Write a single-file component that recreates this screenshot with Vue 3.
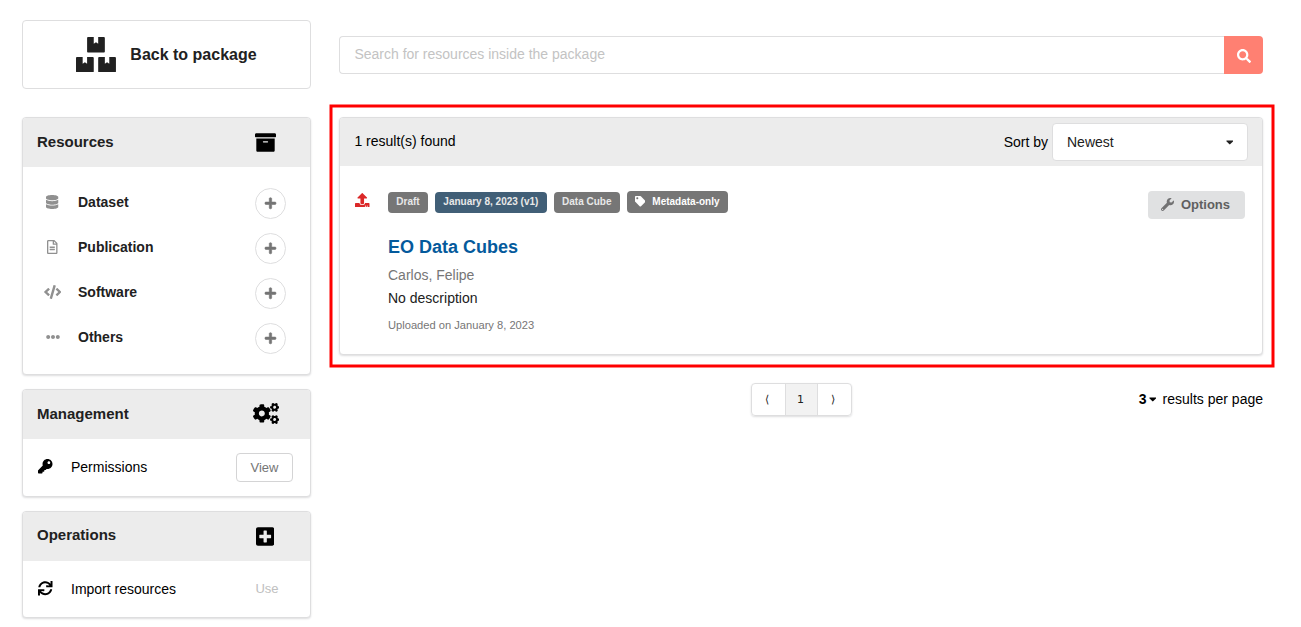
<script setup>
import { h } from 'vue'

const icons = {
  boxes: [576, 'M560 288h-80v96l-32-21.3-32 21.3v-96h-80c-8.8 0-16 7.2-16 16v192c0 8.8 7.2 16 16 16h224c8.8 0 16-7.2 16-16V304c0-8.8-7.2-16-16-16zm-384-64h224c8.8 0 16-7.2 16-16V16c0-8.8-7.2-16-16-16h-80v96l-32-21.3L256 96V0h-80c-8.8 0-16 7.2-16 16v192c0 8.8 7.2 16 16 16zm64 64h-80v96l-32-21.3L96 384v-96H16c-8.8 0-16 7.2-16 16v192c0 8.8 7.2 16 16 16h224c8.8 0 16-7.2 16-16V304c0-8.8-7.2-16-16-16z'],
  archive: [512, 'M32 448c0 17.7 14.3 32 32 32h384c17.7 0 32-14.3 32-32V160H32v288zm160-212c0-6.6 5.4-12 12-12h104c6.6 0 12 5.4 12 12v8c0 6.6-5.4 12-12 12H204c-6.6 0-12-5.4-12-12v-8zM480 32H32C14.3 32 0 46.3 0 64v48c0 8.8 7.2 16 16 16h480c8.8 0 16-7.2 16-16V64c0-17.7-14.3-32-32-32z'],
  database: [448, 'M448 73.143v45.714C448 159.143 347.667 192 224 192S0 159.143 0 118.857V73.143C0 32.857 100.333 0 224 0s224 32.857 224 73.143zM448 176v102.857C448 319.143 347.667 352 224 352S0 319.143 0 278.857V176c48.125 33.143 136.208 48.572 224 48.572S399.874 209.143 448 176zm0 160v102.857C448 479.143 347.667 512 224 512S0 479.143 0 438.857V336c48.125 33.143 136.208 48.572 224 48.572S399.874 369.143 448 336z'],
  file: [384, 'M288 248v28c0 6.6-5.4 12-12 12H108c-6.6 0-12-5.4-12-12v-28c0-6.6 5.4-12 12-12h168c6.6 0 12 5.4 12 12zm-12 72H108c-6.6 0-12 5.4-12 12v28c0 6.6 5.4 12 12 12h168c6.6 0 12-5.4 12-12v-28c0-6.6-5.4-12-12-12zm108-188.1V464c0 26.5-21.5 48-48 48H48c-26.5 0-48-21.5-48-48V48C0 21.5 21.5 0 48 0h204.1C264.8 0 277 5.1 286 14.1L369.9 98c9 8.9 14.1 21.2 14.1 33.9zm-128-80V128h76.1L256 51.9zM336 464V176H232c-13.3 0-24-10.7-24-24V48H48v416h288z'],
  code: [640, 'M278.9 511.5l-61-17.7c-6.4-1.8-10-8.5-8.2-14.9L346.2 8.7c1.8-6.4 8.5-10 14.9-8.2l61 17.7c6.4 1.8 10 8.5 8.2 14.9L293.8 503.3c-1.9 6.4-8.5 10.1-14.9 8.2zm-114-112.2l43.5-46.4c4.6-4.9 4.3-12.7-.8-17.2L117 256l90.6-79.7c5.1-4.5 5.5-12.3.8-17.2l-43.5-46.4c-4.5-4.8-12.1-5.1-17-.5L3.8 247.2c-5.1 4.7-5.1 12.8 0 17.5l144.1 135.1c4.9 4.6 12.5 4.4 17-.5zm327.2.6l144.1-135.1c5.1-4.7 5.1-12.8 0-17.5L492.1 112.1c-4.8-4.5-12.4-4.3-17 .5L431.6 159c-4.6 4.9-4.3 12.7.8 17.2L523 256l-90.6 79.7c-5.1 4.5-5.5 12.3-.8 17.2l43.5 46.4c4.5 4.9 12.1 5.1 17 .6z'],
  ellipsis: [512, 'M328 256c0 39.8-32.2 72-72 72s-72-32.2-72-72 32.2-72 72-72 72 32.2 72 72zm104-72c-39.8 0-72 32.2-72 72s32.2 72 72 72 72-32.2 72-72-32.2-72-72-72zm-352 0c-39.8 0-72 32.2-72 72s32.2 72 72 72 72-32.2 72-72-32.2-72-72-72z'],
  plus: [448, 'M416 208H272V64c0-17.67-14.33-32-32-32h-32c-17.67 0-32 14.33-32 32v144H32c-17.67 0-32 14.33-32 32v32c0 17.67 14.33 32 32 32h144v144c0 17.67 14.33 32 32 32h32c17.67 0 32-14.33 32-32V304h144c17.67 0 32-14.33 32-32v-32c0-17.67-14.33-32-32-32z'],
  cogs: [640, 'M512.1 191l-8.2 14.3c-3 5.3-9.4 7.5-15.1 5.4-11.8-4.4-22.6-10.7-32.1-18.6-4.6-3.8-5.8-10.5-2.8-15.7l8.2-14.3c-6.9-8-12.3-17.3-15.9-27.4h-16.5c-6 0-11.2-4.3-12.2-10.3-2-12-2.1-24.6 0-37.1 1-6 6.2-10.4 12.2-10.4h16.5c3.6-10.1 9-19.4 15.9-27.4l-8.2-14.3c-3-5.2-1.9-11.9 2.8-15.7 9.5-7.9 20.4-14.2 32.1-18.6 5.7-2.1 12.1.1 15.1 5.4l8.2 14.3c10.5-1.9 21.2-1.9 31.7 0L552 6.3c3-5.3 9.4-7.5 15.1-5.4 11.8 4.4 22.6 10.7 32.1 18.6 4.6 3.8 5.8 10.5 2.8 15.7l-8.2 14.3c6.9 8 12.3 17.3 15.9 27.4h16.5c6 0 11.2 4.3 12.2 10.3 2 12 2.1 24.6 0 37.1-1 6-6.2 10.4-12.2 10.4h-16.5c-3.6 10.1-9 19.4-15.9 27.4l8.2 14.3c3 5.2 1.9 11.9-2.8 15.7-9.5 7.9-20.4 14.2-32.1 18.6-5.7 2.1-12.1-.1-15.1-5.4l-8.2-14.3c-10.4 1.9-21.2 1.9-31.7 0zm-10.5-58.8c38.5 29.6 82.4-14.3 52.8-52.8-38.5-29.7-82.4 14.3-52.8 52.8zM386.3 286.1l33.7 16.8c10.1 5.8 14.5 18.1 10.5 29.1-8.9 24.2-26.4 46.4-42.6 65.8-7.4 8.9-20.2 11.1-30.3 5.3l-29.1-16.8c-16 13.7-34.6 24.6-54.9 31.7v33.6c0 11.6-8.3 21.6-19.7 23.6-24.6 4.2-50.4 4.4-75.9 0-11.5-2-20-11.9-20-23.6V418c-20.3-7.2-38.9-18-54.9-31.7L74 403c-10 5.8-22.9 3.6-30.3-5.3-16.2-19.4-33.3-41.6-42.2-65.7-4-10.9.4-23.2 10.5-29.1l33.3-16.8c-3.9-20.9-3.9-42.4 0-63.4L12 205.8c-10.1-5.8-14.6-18.1-10.5-29 8.9-24.2 26-46.4 42.2-65.8 7.4-8.9 20.2-11.1 30.3-5.3l29.1 16.8c16-13.7 34.6-24.6 54.9-31.7V57.1c0-11.5 8.2-21.5 19.6-23.5 24.6-4.2 50.5-4.4 76-.1 11.5 2 20 11.9 20 23.6v33.6c20.3 7.2 38.9 18 54.9 31.7l29.1-16.8c10-5.8 22.9-3.6 30.3 5.3 16.2 19.4 33.2 41.6 42.1 65.8 4 10.9.1 23.2-10 29.1l-33.7 16.8c3.9 21 3.9 42.5 0 63.5zm-117.6 21.1c59.2-77-28.7-164.9-105.7-105.7-59.2 77 28.7 164.9 105.7 105.7zm243.4 182.7l-8.2 14.3c-3 5.3-9.4 7.5-15.1 5.4-11.8-4.4-22.6-10.7-32.1-18.6-4.6-3.8-5.8-10.5-2.8-15.7l8.2-14.3c-6.9-8-12.3-17.3-15.9-27.4h-16.5c-6 0-11.2-4.3-12.2-10.3-2-12-2.1-24.6 0-37.1 1-6 6.2-10.4 12.2-10.4h16.5c3.6-10.1 9-19.4 15.9-27.4l-8.2-14.3c-3-5.2-1.9-11.9 2.8-15.7 9.5-7.9 20.4-14.2 32.1-18.6 5.7-2.1 12.1.1 15.1 5.4l8.2 14.3c10.5-1.9 21.2-1.9 31.7 0l8.2-14.3c3-5.3 9.4-7.5 15.1-5.4 11.8 4.4 22.6 10.7 32.1 18.6 4.6 3.8 5.8 10.5 2.8 15.7l-8.2 14.3c6.9 8 12.3 17.3 15.9 27.4h16.5c6 0 11.2 4.3 12.2 10.3 2 12 2.1 24.6 0 37.1-1 6-6.2 10.4-12.2 10.4h-16.5c-3.6 10.1-9 19.4-15.9 27.4l8.2 14.3c3 5.2 1.9 11.9-2.8 15.7-9.5 7.9-20.4 14.2-32.1 18.6-5.7 2.1-12.1-.1-15.1-5.4l-8.2-14.3c-10.4 1.9-21.2 1.9-31.7 0zM501.6 431c38.5 29.6 82.4-14.3 52.8-52.8-38.5-29.6-82.4 14.3-52.8 52.8z'],
  key: [512, 'M512 176.001C512 273.203 433.202 352 336 352c-11.22 0-22.19-1.062-32.827-3.069l-24.012 27.014A23.999 23.999 0 0 1 261.223 384H224v40c0 13.255-10.745 24-24 24h-40v40c0 13.255-10.745 24-24 24H24c-13.255 0-24-10.745-24-24v-78.059c0-6.365 2.529-12.47 7.029-16.971l161.802-161.802C163.108 213.814 160 195.271 160 176 160 78.798 238.797.001 335.999 0 433.488-.001 512 78.511 512 176.001zM336 128c0 26.51 21.49 48 48 48s48-21.49 48-48-21.49-48-48-48-48 21.49-48 48z'],
  plusSquare: [448, 'M400 32H48C21.5 32 0 53.5 0 80v352c0 26.5 21.5 48 48 48h352c26.5 0 48-21.5 48-48V80c0-26.5-21.5-48-48-48zm-32 252c0 6.6-5.4 12-12 12h-92v92c0 6.6-5.4 12-12 12h-56c-6.6 0-12-5.4-12-12v-92H92c-6.6 0-12-5.4-12-12v-56c0-6.6 5.4-12 12-12h92v-92c0-6.6 5.4-12 12-12h56c6.6 0 12 5.4 12 12v92h92c6.6 0 12 5.4 12 12v56z'],
  sync: [512, 'M440.935 12.574l3.966 82.766C399.416 41.904 331.674 8 256 8 134.813 8 33.933 94.924 12.296 209.824 10.908 217.193 16.604 224 24.103 224h49.084c5.57 0 10.377-3.842 11.676-9.259C103.407 137.408 172.931 80 256 80c60.893 0 114.512 30.856 146.104 77.801l-101.53-4.865c-6.845-.328-12.574 5.133-12.574 11.986v47.411c0 6.627 5.373 12 12 12h200.333c6.627 0 12-5.373 12-12V12c0-6.627-5.373-12-12-12h-47.411c-6.853 0-12.315 5.729-11.987 12.574zM256 432c-60.895 0-114.517-30.858-146.109-77.805l101.868 4.871c6.845.327 12.573-5.134 12.573-11.986v-47.412c0-6.627-5.373-12-12-12H12c-6.627 0-12 5.373-12 12V500c0 6.627 5.373 12 12 12h47.385c6.863 0 12.328-5.745 11.985-12.599l-4.129-82.575C112.725 470.166 180.405 504 256 504c121.187 0 222.067-86.924 243.704-201.824 1.388-7.369-4.308-14.176-11.807-14.176h-49.084c-5.57 0-10.377 3.842-11.676 9.259C408.593 374.592 339.069 432 256 432z'],
  upload: [512, 'M296 384h-80c-13.3 0-24-10.7-24-24V192h-87.7c-17.8 0-26.7-21.5-14.1-34.1L242.3 5.7c7.5-7.5 19.8-7.5 27.3 0l152.2 152.2c12.6 12.6 3.7 34.1-14.1 34.1H320v168c0 13.3-10.7 24-24 24zm216-8v112c0 13.3-10.7 24-24 24H24c-13.3 0-24-10.7-24-24V376c0-13.3 10.7-24 24-24h136v8c0 30.9 25.1 56 56 56h80c30.9 0 56-25.1 56-56v-8h136c13.3 0 24 10.7 24 24zm-124 88c0-11-9-20-20-20s-20 9-20 20 9 20 20 20 20-9 20-20zm64 0c0-11-9-20-20-20s-20 9-20 20 9 20 20 20 20-9 20-20z'],
  tag: [512, 'M0 252.118V48C0 21.49 21.49 0 48 0h204.118a48 48 0 0 1 33.941 14.059l211.882 211.882c18.745 18.745 18.745 49.137 0 67.882L293.823 497.941c-18.745 18.745-49.137 18.745-67.882 0L14.059 286.059A48 48 0 0 1 0 252.118zM112 64c-26.51 0-48 21.49-48 48s21.49 48 48 48 48-21.49 48-48-21.49-48-48-48z'],
  wrench: [512, 'M507.73 109.1c-2.24-9.03-13.54-12.09-20.12-5.51l-74.36 74.36-67.88-11.31-11.31-67.88 74.36-74.36c6.62-6.62 3.43-17.9-5.66-20.16-47.38-11.74-99.55.91-136.58 37.93-39.64 39.64-50.55 97.1-34.05 147.2L18.74 402.76c-24.99 24.99-24.99 65.51 0 90.5 24.99 24.99 65.51 24.99 90.5 0l213.21-213.21c50.12 16.71 107.47 5.68 147.37-34.22 37.07-37.07 49.7-89.32 37.91-136.73zM64 472c-13.25 0-24-10.75-24-24 0-13.26 10.75-24 24-24s24 10.74 24 24c0 13.25-10.75 24-24 24z'],
  search: [512, 'M505 442.7L405.3 343c-4.5-4.5-10.6-7-17-7H372c27.6-35.3 44-79.7 44-128C416 93.1 322.9 0 208 0S0 93.1 0 208s93.1 208 208 208c48.3 0 92.7-16.4 128-44v16.3c0 6.4 2.5 12.5 7 17l99.7 99.7c9.4 9.4 24.6 9.4 33.9 0l28.3-28.3c9.4-9.4 9.4-24.6.1-34zM208 336c-70.7 0-128-57.2-128-128 0-70.7 57.2-128 128-128 70.7 0 128 57.2 128 128 0 70.7-57.2 128-128 128z'],
  caret: [320, 'M31.3 192h257.3c17.8 0 26.7 21.5 14.1 34.1L174.1 354.8c-7.8 7.8-20.5 7.8-28.3 0L17.2 226.1C4.6 213.5 13.5 192 31.3 192z'],
}

const Icon = (props) => {
  const [w, d] = icons[props.name]
  return h(
    'svg',
    { viewBox: `0 0 ${w} 512`, width: (props.size * w) / 512, height: props.size, fill: 'currentColor' },
    [h('path', { d })],
  )
}
Icon.props = ['name', 'size']

const resources = [
  { icon: 'database', label: 'Dataset' },
  { icon: 'file', label: 'Publication' },
  { icon: 'code', label: 'Software' },
  { icon: 'ellipsis', label: 'Others' },
]
</script>

<template>
  <div class="page">
    <aside class="sidebar">
      <a class="back">
        <Icon name="boxes" :size="35.5" />
        <span>Back to package</span>
      </a>

      <section class="card resources">
        <header class="card-head">
          <h2>Resources</h2>
          <span class="head-icon"><Icon name="archive" :size="21" /></span>
        </header>
        <ul class="resource-list">
          <li v-for="r in resources" :key="r.label">
            <span class="resource-icon"><Icon :name="r.icon" :size="14" /></span>
            <span class="resource-label">{{ r.label }}</span>
            <button class="add"><Icon name="plus" :size="12.5" /></button>
          </li>
        </ul>
      </section>

      <section class="card management">
        <header class="card-head">
          <h2>Management</h2>
          <span class="head-icon cogs"><Icon name="cogs" :size="21" /></span>
        </header>
        <div class="action">
          <Icon name="key" :size="14.5" />
          <span class="action-label">Permissions</span>
          <button class="view">View</button>
        </div>
      </section>

      <section class="card operations">
        <header class="card-head">
          <h2>Operations</h2>
          <span class="head-icon"><Icon name="plusSquare" :size="21" /></span>
        </header>
        <div class="action">
          <Icon name="sync" :size="14.5" />
          <span class="action-label">Import resources</span>
          <span class="use">Use</span>
        </div>
      </section>
    </aside>

    <main class="content">
      <div class="search">
        <input type="text" placeholder="Search for resources inside the package" />
        <button><Icon name="search" :size="14" /></button>
      </div>

      <section class="card results">
        <svg class="highlight" width="946" height="264">
          <rect x="2" y="2" width="942" height="260" fill="none" stroke="#f00" stroke-width="3" />
        </svg>
        <header class="results-head">
          <span class="found">1 result(s) found</span>
          <span class="sort-label">Sort by</span>
          <div class="select">
            <span>Newest</span>
            <Icon name="caret" :size="12" />
          </div>
        </header>
        <article class="record">
          <span class="status"><Icon name="upload" :size="14.5" /></span>
          <div class="record-body">
            <div class="labels">
              <span class="label">Draft</span>
              <span class="label version">January 8, 2023 (v1)</span>
              <span class="label">Data Cube</span>
              <span class="label access"><Icon name="tag" :size="10.5" />Metadata-only</span>
            </div>
            <h3>EO Data Cubes</h3>
            <p class="author">Carlos, Felipe</p>
            <p class="description">No description</p>
            <p class="uploaded">Uploaded on January 8, 2023</p>
          </div>
          <button class="options"><Icon name="wrench" :size="13" />Options</button>
        </article>
      </section>

      <footer class="footer">
        <nav class="pagination">
          <a>⟨</a>
          <a class="active">1</a>
          <a>⟩</a>
        </nav>
        <div class="per-page">
          <b>3</b>
          <Icon name="caret" :size="12" />
          <span>results per page</span>
        </div>
      </footer>
    </main>
  </div>
</template>

<style>
body {
  margin: 0;
  background: #fff;
}
</style>

<style scoped>
.page {
  box-sizing: border-box;
  width: 1301px;
  height: 627px;
  overflow: hidden;
  padding: 20px 38px 0 22px;
  display: grid;
  grid-template-columns: 289px 924px;
  column-gap: 28px;
  font-family: "Liberation Sans", Arial, sans-serif;
  font-size: 14px;
  line-height: 20px;
  color: #000;
}
.page *,
.page *::before {
  box-sizing: border-box;
}
svg {
  display: block;
  flex: none;
}
button,
input {
  font-family: inherit;
  margin: 0;
  padding: 0;
}
h2,
h3,
p,
ul {
  margin: 0;
  padding: 0;
}
.sidebar {
  display: flex;
  flex-direction: column;
  gap: 14px;
}
.back {
  height: 69px;
  margin-bottom: 14px;
  border: 1px solid #dededf;
  border-radius: 4px;
  display: flex;
  align-items: center;
  justify-content: center;
  gap: 14px;
  font-size: 16px;
  font-weight: bold;
  color: #212121;
}
.card {
  border: 1px solid #dededf;
  border-radius: 4px;
  box-shadow: 0 1px 2px 0 rgba(34, 36, 38, 0.15);
  background: #fff;
}
.card-head {
  height: 49px;
  padding-left: 14px;
  background: #ececec;
  border-radius: 3px 3px 0 0;
  display: flex;
  align-items: center;
  justify-content: space-between;
}
.card-head h2 {
  padding-bottom: 2px;
  font-size: 15px;
  font-weight: bold;
  color: #212121;
}
.head-icon {
  width: 91px;
  padding: 0 0 1px 1px;
  display: flex;
  justify-content: center;
}
.cogs {
  padding: 0 0 2px 3px;
}
.resources {
  height: 258px;
}
.management {
  height: 108px;
}
.operations {
  height: 107px;
}
.operations h2 {
  padding-bottom: 4px;
}
.resource-list {
  list-style: none;
  padding: 14px 24px 0 14px;
}
.resource-list li {
  height: 45px;
  display: flex;
  align-items: center;
}
.resource-icon {
  width: 31px;
  margin-right: 10px;
  padding-bottom: 3px;
  display: flex;
  justify-content: center;
  color: #909090;
}
.resource-label {
  flex: 1;
  font-weight: bold;
  color: #212121;
  padding-bottom: 3px;
}
.add {
  width: 31px;
  height: 31px;
  padding-bottom: 1px;
  border: 1px solid #dededf;
  border-radius: 50%;
  background: #fff;
  color: #757575;
  display: flex;
  align-items: center;
  justify-content: center;
}
.add svg {
  stroke: currentColor;
  stroke-width: 26px;
  overflow: visible;
}
.action {
  height: 57px;
  padding: 0 17px 0 15px;
  display: flex;
  align-items: center;
}
.action > svg {
  margin-bottom: 2px;
}
.action-label {
  flex: 1;
  margin-left: 18.5px;
  padding-bottom: 2px;
}
.view {
  width: 57px;
  height: 29px;
  border: 1px solid #d4d4d5;
  border-radius: 4px;
  background: #fff;
  color: #757575;
  font-size: 13px;
}
.use {
  width: 52px;
  padding-bottom: 2px;
  text-align: center;
  font-size: 13px;
  color: #c0c0c0;
}
.content {
  padding-top: 16px;
}
.search {
  height: 38px;
  display: flex;
}
.search input {
  flex: 1;
  padding: 0 14px 2px 14.4px;
  border: 1px solid #dededf;
  border-right: 0;
  border-radius: 4px 0 0 4px;
  font-size: 14px;
  outline: 0;
}
.search input::placeholder {
  color: #c3c3c3;
  opacity: 1;
}
.search button {
  width: 39px;
  padding-top: 1px;
  border: 0;
  border-radius: 0 4px 4px 0;
  background: #ff8072;
  color: #fff;
  display: flex;
  align-items: center;
  justify-content: center;
}
.results {
  position: relative;
  height: 238px;
  margin-top: 43px;
}
.highlight {
  position: absolute;
  left: -11px;
  top: -14px;
  pointer-events: none;
}
.results-head {
  height: 48px;
  padding: 0 14px;
  background: #ececec;
  border-radius: 3px 3px 0 0;
  display: flex;
  align-items: center;
}
.found {
  flex: 1;
  padding: 0 0 2px 0.4px;
}
.sort-label {
  margin-right: 4px;
}
.select {
  width: 196px;
  height: 38px;
  padding: 0 14px;
  border: 1px solid #dededf;
  border-radius: 4px;
  background: #fff;
  color: #212121;
  display: flex;
  align-items: center;
  justify-content: space-between;
}
.record {
  display: flex;
  align-items: flex-start;
  padding: 25px 17px 0 15px;
}
.status {
  width: 33px;
  padding-top: 1.5px;
  color: #db2828;
}
.record-body {
  flex: 1;
}
.labels {
  display: flex;
  align-items: flex-end;
  gap: 7px;
}
.label {
  height: 21px;
  padding: 0 8.33px;
  border-radius: 4px;
  background: #767676;
  color: #e8e8e8;
  font-size: 10px;
  font-weight: bold;
  line-height: 19px;
  white-space: nowrap;
}
.version {
  background: #415f77;
}
.access {
  height: 22px;
  padding: 0 8px 1px;
  display: flex;
  align-items: center;
  gap: 7px;
  color: #fff;
}
h3 {
  margin-top: 22px;
  font-size: 18px;
  line-height: 24px;
  color: #045a9c;
}
.author {
  margin-top: 6px;
  color: #767676;
}
.description {
  margin-top: 3px;
  color: #212121;
}
.uploaded {
  margin-top: 7px;
  font-size: 11.15px;
  color: #767676;
}
.options {
  width: 97px;
  height: 28px;
  padding: 0 2px 2px 0;
  border: 0;
  border-radius: 4px;
  background: #e0e1e2;
  color: #5f5f60;
  font-size: 13px;
  font-weight: bold;
  display: flex;
  align-items: center;
  justify-content: center;
  gap: 7px;
}
.options svg {
  opacity: 0.85;
}
.footer {
  display: grid;
  grid-template-columns: 1fr auto 1fr;
  align-items: center;
  margin-top: 28px;
}
.pagination {
  grid-column: 2;
  width: 101px;
  height: 33px;
  border: 1px solid #dededf;
  border-radius: 4px;
  box-shadow: 0 1px 2px 0 rgba(34, 36, 38, 0.15);
  display: flex;
  font-size: 11px;
}
.pagination a {
  flex: 1;
  padding: 0 3px 1px 0;
  display: flex;
  align-items: center;
  justify-content: center;
  color: #212121;
}
.pagination a + a {
  border-left: 1px solid #dededf;
}
.pagination .active {
  padding: 0 1px 0 0;
  background: #f2f2f2;
  font-family: "DejaVu Sans", sans-serif;
  font-size: 11px;
}
.per-page {
  display: flex;
  align-items: center;
  justify-content: flex-end;
  padding-bottom: 2px;
}
.per-page svg {
  margin: 0 6.5px 0 2px;
}
</style>
